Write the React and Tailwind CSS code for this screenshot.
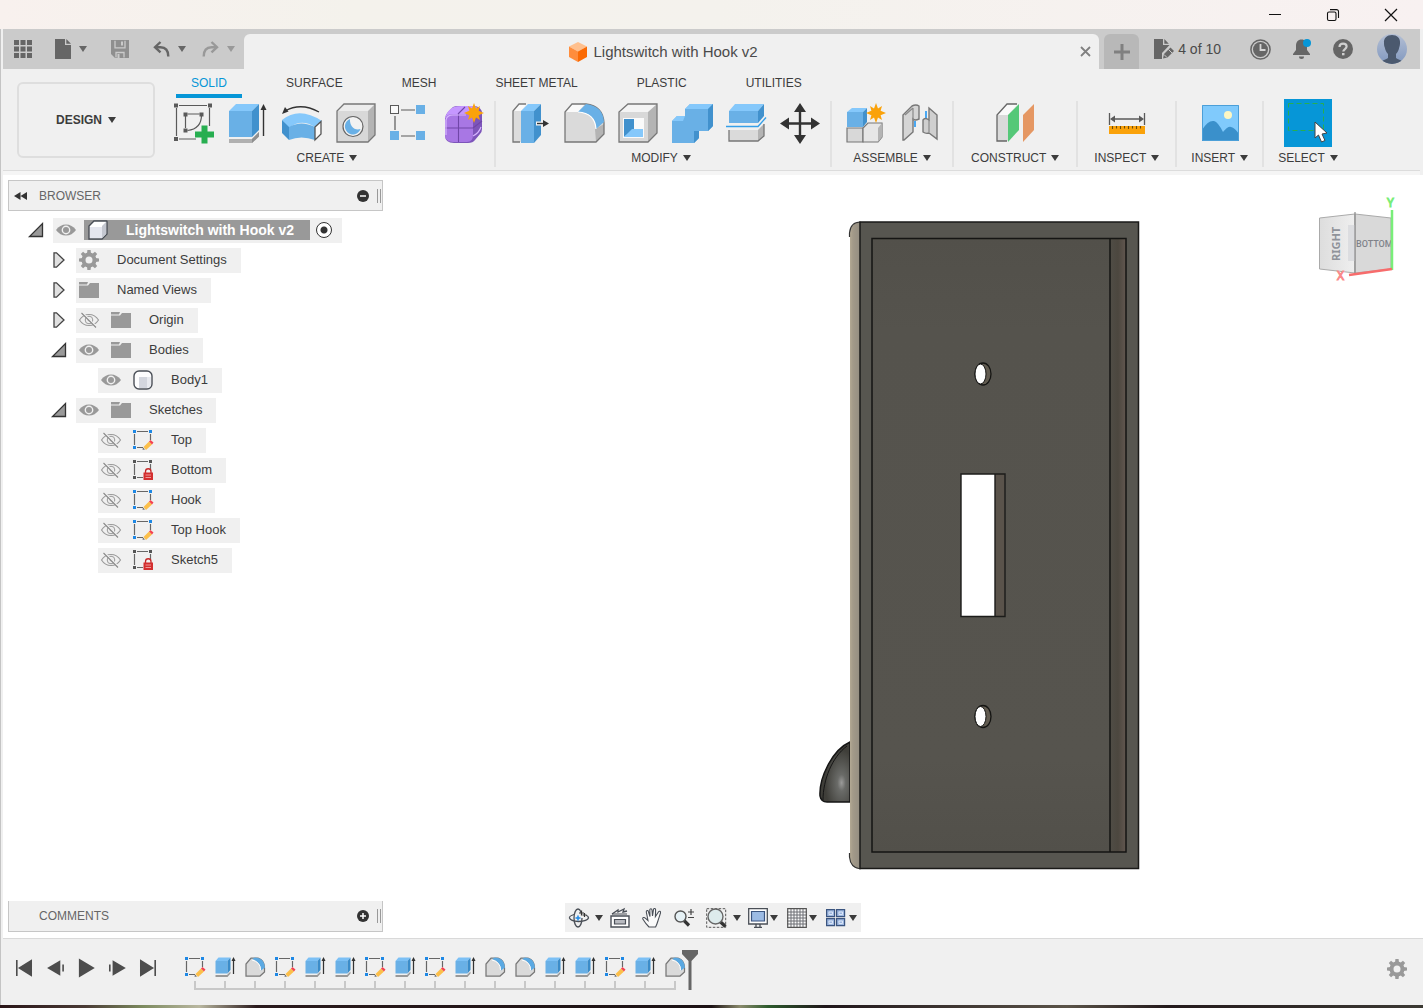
import React, { useState } from 'react';

const Caret = ({ className = 'text-[#3c3c3c]' }) => (
  <svg className={`w-2 h-1.5 shrink-0 ${className}`} viewBox="0 0 8 6" fill="currentColor">
    <path d="M0 0h8L4 6z" />
  </svg>
);

const Svg = ({ size = 'w-10 h-10', box = '0 0 40 40', children }) => (
  <svg className={`${size} shrink-0 block overflow-visible`} viewBox={box} fill="none">{children}</svg>
);

/* ---------- quick access bar icons ---------- */

const GridIcon = () => (
  <Svg size="w-[18px] h-[18px]" box="0 0 18 18">
    {[0, 6.5, 13].map(y => [0, 6.5, 13].map(x => <rect key={`${x}-${y}`} x={x} y={y} width="5" height="5" fill="#666" />))}
  </Svg>
);

const FileIcon = () => (
  <Svg size="w-[18px] h-5" box="0 0 18 20">
    <path d="M1 0h10v6h6v13.5a.5.5 0 0 1-.5.5h-15a.5.5 0 0 1-.5-.5z" fill="#666" />
    <path d="M12.300 0L17 4.800h-4.700z" fill="#666" />
  </Svg>
);

const SaveIcon = () => (
  <Svg size="w-[18px] h-[18px]" box="0 0 18 18">
    <path d="M0 0h18v18H4l-4-4z" fill="#8f8f8f" />
    <path d="M4 .800v7h10v-7M5 17.500v-5h8v5" stroke="#cbcbcb" strokeWidth="1.300" />
    <path d="M10 1.500h2v4h-2zM6.500 14h2v4h-2z" fill="#cbcbcb" />
  </Svg>
);

const UndoIcon = ({ flip, color }) => (
  <Svg size="w-[17px] h-4" box="0 0 17 16">
    <g transform={flip ? 'translate(17 0) scale(-1 1)' : undefined} stroke={color} strokeWidth="2.400">
      <path d="M7.500 1L2 6.200l5.500 5.200" />
      <path d="M2 6.200h5.500c5 0 7.800 3.300 7.800 9.300" />
    </g>
  </Svg>
);

const JobIcon = () => (
  <Svg size="w-5 h-5" box="0 0 20 20">
    <path d="M0 0h9v6h6.500L8 14v6H0z" fill="#666" />
    <path d="M10.300 0l4.500 4.800h-4.500z" fill="#666" />
    <path d="M9 19.500l1-4.500 6.500-6.500 3.500 3.500-6.500 6.500z" fill="#666" />
    <path d="M14.500 10.500l3.500 3.500M10 15.500l3 3" stroke="#cbcbcb" />
  </Svg>
);

const ClockIcon = () => (
  <Svg size="w-[21px] h-[21px]" box="0 0 21 21">
    <circle cx="10.500" cy="10.500" r="9.600" stroke="#666" strokeWidth="1.500" />
    <circle cx="10.500" cy="10.500" r="7.500" fill="#666" />
    <path d="M10.500 5v6h5" stroke="#d5d5d5" strokeWidth="1.800" />
  </Svg>
);

const BellIcon = () => (
  <Svg size="w-5 h-[22px]" box="0 0 20 22">
    <path d="M8.500 1.500c3.600 0 5.500 2.500 5.500 6.500v4l3 4v1H0v-1l3-4V8c0-4 2-6.500 5.500-6.500z" fill="#666" />
    <path d="M6 18.500h5a2.500 2.500 0 0 1-5 0z" fill="#666" />
    <circle cx="14" cy="5" r="4" fill="#0696d7" />
  </Svg>
);

const HelpIcon = () => (
  <Svg size="w-5 h-5" box="0 0 20 20">
    <circle cx="10" cy="10" r="10" fill="#666" />
    <path d="M6.500 8c0-2.200 1.500-3.400 3.600-3.400s3.500 1.200 3.500 3c0 2.400-3.300 2.600-3.300 5" stroke="#cfcfcf" strokeWidth="2.200" />
    <rect x="9" y="14" width="2.500" height="2.300" fill="#cfcfcf" />
  </Svg>
);

const Avatar = () => (
  <svg className="w-[30px] h-[30px] rounded-full" viewBox="0 0 30 30">
    <defs>
      <linearGradient id="avatar" x1="0" y1="0" x2="0" y2="1">
        <stop offset="0" stopColor="#b4bfd4" />
        <stop offset="1" stopColor="#8198bf" />
      </linearGradient>
    </defs>
    <rect width="30" height="30" fill="url(#avatar)" />
    <path d="M7 9c-.500-5 3-8 8-8s8.500 3 8 8c0 2-.300 3-.800 4.500-.500 3-1.700 5-3.200 6.500v4c2 1.500 4.500 2 7 3.500l-4 2.500H8l-4-2.500c2.500-1.500 5-2 7-3.500v-4c-1.500-1.500-2.700-3.500-3.200-6.500C7.200 12 7 11 7 9z" fill="#4b596e" />
  </svg>
);

const OrangeCube = () => (
  <Svg size="w-[18px] h-5" box="0 0 18 20">
    <path d="M9 0l9 4.500L9 9.500 0 4.500z" fill="#ffc08e" />
    <path d="M0 4.500l9 5V20l-9-5z" fill="#ff8d3c" />
    <path d="M18 4.500l-9 5V20l9-5z" fill="#fb6a04" />
  </Svg>
);

/* ---------- ribbon icons ---------- */

const Star = ({ x, y }) => (
  <path
    transform={`translate(${x} ${y})`}
    d="M0-10L2-4.600 6-7 4.600-2.200 10 0 4.600 2.200 6 7 2 4.600 0 10-2 4.600-6 7-4.600 2.200-10 0-4.600-2.200-6-7-2-4.600z"
    fill="#faa20a"
  />
);

const CreateSketch = () => (
  <Svg>
    <path d="M5 2.500h28M2.500 5v28M35.500 5v18M5 36h17M13.500 11h12M11.500 13v12M27.500 12c0 9-5 14.500-14 15.500" stroke="#5a5a5a" strokeWidth="1.200" />
    <path d="M0 .500h4v4H0zM34 .500h4v4h-4zM0 34h4v4H0zM9.500 9.500h4v4h-4zM25.500 9.500h4v4h-4zM9.500 25.500h4v4h-4z" fill="#5a5a5a" />
    <path d="M27.500 22.500h6v6H40v6h-6.500v6h-6v-6H21v-6h6.500z" fill="#27ae50" />
  </Svg>
);

const Extrude = () => (
  <Svg>
    <path d="M1 36h23l7-7v4.500L24 40H1z" fill="#b0b0b0" />
    <path d="M24 36l7-7v4.500L24 40z" fill="#8f8f8f" />
    <path d="M1 8l7-7h23l-7 7z" fill="#85c8fb" />
    <path d="M1 8h23v26H1z" fill="#69b0e6" />
    <path d="M24 8l7-7v26l-7 7z" fill="#4191cd" />
    <path d="M35.500 5v28" stroke="#333" strokeWidth="1.400" />
    <path d="M35.500 1l3 6h-6z" fill="#333" />
  </Svg>
);

const Revolve = () => (
  <Svg>
    <path d="M0 17Q17 3 40 18l-7 6Q19 15 7 25z" fill="#85c8fb" />
    <path d="M0 17l7 7v13l-7-7z" fill="#4191cd" />
    <path d="M7 24Q19 17 33 24v13Q19 32 7 37z" fill="#69b0e6" />
    <path d="M33 24l6-5.500V31l-6 6z" fill="#fafafa" stroke="#555" strokeWidth="1.300" />
    <path d="M3 8Q19-1 37 9" stroke="#333" strokeWidth="1.300" />
    <path d="M0 11l3-7 3.500 4.500z" fill="#333" />
  </Svg>
);

const Hole = () => (
  <Svg>
    <path d="M1 8l7-7h31l-7 7z" fill="#ececec" />
    <path d="M1 8h31v31H1z" fill="#d8d8d8" />
    <path d="M32 8l7-7v31l-7 7z" fill="#b4b4b4" />
    <path d="M1 39V8l7-7h31v31l-7 7z" stroke="#777" strokeWidth="1.300" />
    <circle cx="17" cy="23.500" r="10" fill="#f2f2f2" stroke="#666" strokeWidth="1.200" />
    <path d="M14 16a8 8 0 1 0 10.500 10c-6 2-11-3-10.500-10z" fill="#69b0e6" />
  </Svg>
);

const Pattern = () => (
  <Svg>
    <path d="M11 7h14M5 13v14M11 33h14" stroke="#5a5a5a" strokeWidth="1.200" />
    <rect x=".5" y="2.500" width="8" height="8" fill="#fafafa" stroke="#5a5a5a" />
    <path d="M26 2h9v9h-9zM0 28h9v9H0zM26 28h9v9h-9z" fill="#69b0e6" />
  </Svg>
);

const Form = () => (
  <Svg>
    <path d="M1 16Q1 12 4 9l5-5q2-1 5-1h15q9 0 9 8v15q0 3-2 5l-5 6q-2 3-7 3H10q-9 0-9-8z" fill="#7d55ba" />
    <path d="M1 15Q3 7 10 4q3-1 8-1h11q5 1 6 4L26 13H8z" fill="#c597ff" />
    <path d="M1 18q0-7 7-7h15q6 0 6 6v15q0 7-6 7H9q-8 0-8-7z" fill="#a877e4" />
    <path d="M14.500 11v28M1 25h28M14 11l7-7M29 25l9-7" stroke="#7046a8" strokeWidth="1.100" />
    <path d="M2 32q0-4 0-15 1-5 7-5h13M29 33q6-3 8-9" stroke="#d5b4ff" strokeWidth="1.200" />
    <Star x={30} y={10} />
  </Svg>
);

const PressPull = () => (
  <Svg>
    <path d="M3 8l6-7h8l-6 7v31H3z" fill="#dcdcdc" />
    <path d="M3 8l6-7h8l-6 7z" fill="#fafafa" />
    <path d="M10 39H3V8l6-7h7" stroke="#777" strokeWidth="1.300" />
    <path d="M11 8l7-7h13l-7 7z" fill="#85c8fb" />
    <path d="M11 8h13v32H11z" fill="#69b0e6" />
    <path d="M24 8l7-7v31l-7 8z" fill="#4191cd" />
    <path d="M26 20.500h8" stroke="#f5f5f5" strokeWidth="4" />
    <path d="M27 20.500h7" stroke="#333" strokeWidth="1.400" />
    <path d="M33 17l6 3.500-6 3.500z" fill="#333" />
  </Svg>
);

const Fillet = () => (
  <Svg>
    <path d="M1 39V9l7-8h14q17 2 18 19v11l-8 8z" fill="#dadada" />
    <path d="M1 9l7-8h13l-7 8z" fill="#fafafa" />
    <path d="M31 26l9-5v10l-8 8z" fill="#b4b4b4" />
    <path d="M1 39V9l7-8h14q17 2 18 19v11l-8 8z" stroke="#777" strokeWidth="1.300" />
    <path d="M14 9l8-8q17 2 18 18l-8 7q0-16-18-17z" fill="#69b0e6" />
    <path d="M14 9q17 1 18 17" stroke="#fff" strokeWidth="1.200" />
  </Svg>
);

const Shell = () => (
  <Svg>
    <path d="M1 9l9-8h29l-9 8z" fill="#f4f4f4" />
    <path d="M1 9h29v30H1z" fill="#d8d8d8" />
    <path d="M30 9l9-8v29l-9 9z" fill="#b4b4b4" />
    <path d="M1 39V9l9-8h29v29l-9 9z" stroke="#777" strokeWidth="1.300" />
    <path d="M5 15h21v20H5z" fill="#fafafa" />
    <path d="M6 16h10v10L6 34z" fill="#4191cd" />
    <path d="M6 34l8-8h11v8z" fill="#85c8fb" />
  </Svg>
);

const Combine = () => (
  <Svg>
    <path d="M0 18l5-5h8V6l5-5h23v22l-5 5h-9v7l-5 5H0z" fill="#69b0e6" />
    <path d="M13 6l5-5h23l-5 5zM0 18l5-5h8l-2 5z" fill="#85c8fb" />
    <path d="M36 6l5-5v22l-5 5zM22 28h5v7l-5 5z" fill="#4191cd" />
  </Svg>
);

const Split = () => (
  <Svg>
    <path d="M3 8l6-7h29l-6 7z" fill="#85c8fb" />
    <path d="M3 8h29v12H3z" fill="#69b0e6" />
    <path d="M32 8l6-7v12l-6 7z" fill="#4191cd" />
    <path d="M0 23.500h32l8-9" stroke="#359fe8" strokeWidth="1.400" />
    <path d="M3 27h29l6-6v12l-6 5H3z" fill="#dadada" />
    <path d="M32 27l6-6v12l-6 5z" fill="#b4b4b4" />
    <path d="M3 27v11h29l6-5V21" stroke="#777" strokeWidth="1.300" />
  </Svg>
);

const Move = () => (
  <Svg>
    <path d="M20 6v28M6 20.500h28" stroke="#333" strokeWidth="2.400" />
    <path d="M20 0l6 9H14zM20 41l6-9H14zM0 20.500l9-6v12zM40 20.500l-9-6v12z" fill="#333" />
  </Svg>
);

const NewComponent = () => (
  <Svg>
    <path d="M1 25h16v14H1z" fill="#d8d8d8" stroke="#777" strokeWidth="1.200" />
    <path d="M17 25l5-5h14v14l-4 5H17z" fill="#e6e6e6" stroke="#777" strokeWidth="1.200" />
    <path d="M32 25l4-5v14l-4 5z" fill="#b4b4b4" />
    <path d="M1 9l5-4h15l-4 4z" fill="#85c8fb" />
    <path d="M1 9h16v15H1z" fill="#69b0e6" />
    <path d="M17 9l4-4v14l-4 5z" fill="#4191cd" />
    <Star x={30} y={10} />
  </Svg>
);

const Joint = () => (
  <Svg>
    <path d="M3 12l9-9q4-2 7 0v13q-4 2-6 0v13L4 37H3z" fill="#d5d5d5" stroke="#777" strokeWidth="1.400" />
    <path d="M13 5v12M5 12l8-7" stroke="#8a8a8a" strokeWidth="1.200" />
    <path d="M15 18v6M26 8v8" stroke="#2196f3" strokeWidth="1.600" />
    <path d="M37 12l-8-7v12q-4-3-6 0v12q3 2 6 1l8 6z" fill="#cfcfcf" stroke="#777" strokeWidth="1.400" />
    <path d="M29 17v12" stroke="#8a8a8a" strokeWidth="1.200" />
  </Svg>
);

const Plane = () => (
  <Svg>
    <path d="M2 12L12 1h11L13 12v26H2z" fill="#dadada" />
    <path d="M2 12L12 1h11L13 12z" fill="#fafafa" />
    <path d="M12 38H2V12L12 1h10" stroke="#666" strokeWidth="1.300" />
    <path d="M13 12L24 1v26L13 39z" fill="#55c878" />
    <path d="M28 12L39 1v26L28 39z" fill="#e59763" />
  </Svg>
);

const Measure = () => (
  <Svg>
    <path d="M2.500 10v12M37.500 10v12M7 16h26" stroke="#5a5a5a" strokeWidth="1.300" />
    <path d="M3 16l5-3.500v7zM37 16l-5-3.500v7z" fill="#5a5a5a" />
    <path d="M2 23h36v8H2z" fill="#faa20a" />
    <path d="M5.500 23v3M9.500 23v2.500M13.500 23v3M17.500 23v2.500M21.500 23v3M25.500 23v2.500M29.500 23v3M33.500 23v2.500" stroke="#6d4c0a" strokeWidth="1.100" />
  </Svg>
);

const Picture = () => (
  <Svg>
    <path d="M2 2h37v36H2z" fill="#80cafc" />
    <path d="M2 27Q8 17 14 18q4 1 9 11 5-6 8-5 4 1 8 7v7H2z" fill="#3a90cb" />
    <circle cx="28" cy="12" r="4" fill="#fdf7c3" />
    <path d="M2.500 2.500h36v35h-36z" stroke="#4b9fd8" />
  </Svg>
);

const SelectIcon = () => (
  <Svg size="w-12 h-12 -my-1" box="0 0 48 48">
    <path d="M0 0h48v48H0z" fill="#0696d7" />
    <path d="M4.500 4.500h35v27h-35z" stroke="#27ae50" strokeDasharray="5 3" />
    <path d="M31 23v16l3.500-3 3 7 3.500-1.500-3-6.500 5-1z" fill="#fff" stroke="#444" />
  </Svg>
);

const groups = [
  { name: 'CREATE', pad: 'pl-3.5 pr-2.5', labelPad: 'px-4', icons: [CreateSketch, Extrude, Revolve, Hole, Pattern, Form] },
  { name: 'MODIFY', pad: 'pl-3.5 pr-2.5', labelPad: 'pl-3 pr-4', icons: [PressPull, Fillet, Shell, Combine, Split, Move] },
  { name: 'ASSEMBLE', pad: 'pl-3.5 pr-3', labelPad: 'px-4', icons: [NewComponent, Joint] },
  { name: 'CONSTRUCT', pad: 'px-3', labelPad: 'px-[17px]', icons: [Plane] },
  { name: 'INSPECT', pad: 'px-3', labelPad: 'px-4', icons: [Measure] },
  { name: 'INSERT', pad: 'px-3', labelPad: 'px-3.5', icons: [Picture] },
  { name: 'SELECT', pad: 'px-3', labelPad: 'px-3.5', icons: [SelectIcon] }
];

const tabs = ['SOLID', 'SURFACE', 'MESH', 'SHEET METAL', 'PLASTIC', 'UTILITIES'];

/* ---------- browser tree icons ---------- */

const Eye = () => (
  <Svg size="w-5 h-5" box="0 0 20 20">
    <path d="M0 10Q4 4.500 10 4.500T20 10q-4 5.500-10 5.500T0 10z" fill="#999" />
    <circle cx="10" cy="10" r="3.700" stroke="#f0f0f0" strokeWidth="1.400" />
  </Svg>
);

const EyeOff = () => (
  <Svg size="w-5 h-5" box="0 0 20 20">
    <path d="M.500 10Q4 4.500 10 4.500T19.500 10Q16 15.500 10 15.500T.500 10z" stroke="#999" strokeWidth="1.100" />
    <circle cx="10" cy="10" r="3.800" stroke="#999" />
    <circle cx="10" cy="10" r="1.300" fill="#999" />
    <path d="M3.500 3L18 17.500" stroke="#f0f0f0" strokeWidth="2" />
    <path d="M2.500 3L17 17.500" stroke="#888" strokeWidth="1.100" />
  </Svg>
);

const Folder = () => (
  <Svg size="w-5 h-5" box="0 0 20 20">
    <path d="M0 2h9l-1 2.500H0zM0 5.500h9L11 3h9v15H0z" fill="#999" />
  </Svg>
);

const Gear = () => (
  <Svg size="w-5 h-5" box="0 0 20 20">
    <circle cx="10" cy="10" r="5.500" stroke="#999" strokeWidth="4" />
    {[0, 45, 90, 135, 180, 225, 270, 315].map(a => (
      <path key={a} d="M8 3.500L8.400 0h3.200l.400 3.500z" fill="#999" transform={`rotate(${a} 10 10)`} />
    ))}
  </Svg>
);

const BoxIcon = () => (
  <Svg size="w-5 h-5" box="0 0 20 20">
    <path d="M1 19V6l5-5h12.500q.500 0 .500.500V14l-5 5z" fill="#fff" stroke="#4a4f57" strokeWidth="1.400" />
    <path d="M2 7h12v11H2z" fill="#e4e6ee" />
    <path d="M14 6l4-4v12l-4 4z" fill="#c4c7d0" />
  </Svg>
);

const BodyIcon = () => (
  <Svg size="w-5 h-5" box="0 0 20 20">
    <rect x="1" y="1" width="18" height="18" rx="5" fill="#fdfdfe" stroke="#4a4f57" strokeWidth="1.400" />
    <path d="M6 7h8v11H6z" fill="#d3d6de" />
    <path d="M14 7h4v8q-1 3-4 3z" fill="#e8eaef" />
  </Svg>
);

const Sketch = ({ locked }) => {
  const dot = locked ? '#555' : '#1e88e5';
  return (
    <Svg size="w-5 h-5" box="0 0 20 20">
      <path d="M4 1.500h11M1.500 4v11M17.500 4v6M4 17.500h6" stroke="#666" strokeWidth="1.200" />
      <path d="M0 0h3v3H0zM16 0h3v3h-3zM0 16h3v3H0z" fill={dot} />
      {locked ? (
        <>
          <path d="M12.500 13v-1.500a2.700 2.700 0 0 1 5.500 0V13" stroke="#c62828" strokeWidth="1.300" />
          <rect x="10.500" y="12.500" width="9.500" height="7.500" fill="#d32f2f" />
          <path d="M12.500 15h5.500M12.500 17.500h5.500" stroke="#ee9a9a" />
        </>
      ) : (
        <>
          <path d="M12 19.500l-2.500.300.500-2.300z" fill="#666" />
          <path d="M10.500 17l5.500-5.500 3 3-6 5.500z" fill="#fbbf4b" />
          <path d="M16 11.500l1.500-1.500 3 2.500-1.500 2z" fill="#f4414f" />
        </>
      )}
    </Svg>
  );
};

const SketchLocked = () => <Sketch locked />;

const Expander = ({ open }) => (
  <Svg size="w-4 h-4" box="0 0 16 16">
    {open ? (
      <path d="M14.500 1.500v13h-13z" fill="#999" stroke="#333" strokeWidth="1.300" />
    ) : (
      <path d="M3 .800h2.500L13 8l-7.500 7.200H3z" fill="#e0e0e0" stroke="#444" strokeWidth="1.300" />
    )}
  </Svg>
);

const tree = [
  { name: 'Document Settings', depth: 1, open: false, icon: Gear },
  { name: 'Named Views', depth: 1, open: false, icon: Folder },
  { name: 'Origin', depth: 1, open: false, eye: 'off', icon: Folder },
  { name: 'Bodies', depth: 1, open: true, eye: 'on', icon: Folder },
  { name: 'Body1', depth: 2, eye: 'on', icon: BodyIcon },
  { name: 'Sketches', depth: 1, open: true, eye: 'on', icon: Folder },
  { name: 'Top', depth: 2, eye: 'off', icon: Sketch },
  { name: 'Bottom', depth: 2, eye: 'off', icon: SketchLocked },
  { name: 'Hook', depth: 2, eye: 'off', icon: Sketch },
  { name: 'Top Hook', depth: 2, eye: 'off', icon: Sketch },
  { name: 'Sketch5', depth: 2, eye: 'off', icon: SketchLocked }
];

const TreeRow = ({ item }) => {
  const [visible, setVisible] = useState(item.eye === 'on');
  const Icon = item.icon;
  return (
    <li className={`flex items-center h-[30px] ${item.depth === 2 ? 'pl-[90px]' : 'pl-[43px]'}`}>
      {item.open !== undefined && (
        <button aria-label={`Toggle ${item.name}`} className="mr-[9px]"><Expander open={item.open} /></button>
      )}
      <div className="flex items-center h-[25px] bg-[#f0f0f0] pl-[3px] pr-3.5">
        {item.eye && (
          <button aria-label={`Visibility of ${item.name}`} className="mr-3" onClick={() => setVisible(!visible)}>
            {visible ? <Eye /> : <EyeOff />}
          </button>
        )}
        <Icon />
        <span className="ml-[18px] text-[13px] text-[#3c3c3c] whitespace-nowrap">{item.name}</span>
      </div>
    </li>
  );
};

const PanelHeader = ({ title, collapsed }) => (
  <div className={`flex items-center h-[31px] bg-[#f0f0f0] border-[#c6c6c6] ${collapsed ? 'border-x border-b' : 'border'}`}>
    <span className="w-[30px] pl-[5px]">
      {!collapsed && (
        <Svg size="w-[13px] h-2" box="0 0 13 8"><path d="M6.500 0v8L0 4zM13 0v8L6.500 4z" fill="#333" /></Svg>
      )}
    </span>
    <span className="flex-1 text-xs text-[#666]">{title}</span>
    <button aria-label={collapsed ? `Expand ${title}` : `Collapse ${title}`}>
      <Svg size="w-3 h-3" box="0 0 12 12">
        <circle cx="6" cy="6" r="6" fill="#333" />
        <path d={collapsed ? 'M3 6h6M6 3v6' : 'M3 6h6'} stroke="#fff" strokeWidth="1.500" />
      </Svg>
    </button>
    <span className="ml-2 mr-px h-3.5 w-1 border-x border-[#999]" />
  </div>
);

/* ---------- viewport ---------- */

const Model = () => (
  <svg className="absolute inset-0 w-full h-full" viewBox="3 175 1420 763" fill="none">
    <defs>
      <linearGradient id="side" x1="0" x2="1" y1="0" y2="0">
        <stop offset="0" stopColor="#b3a994" />
        <stop offset=".25" stopColor="#a39a89" />
        <stop offset="1" stopColor="#918b80" />
      </linearGradient>
      <linearGradient id="lip" x1="0" x2="1" y1="0" y2="0">
        <stop offset="0" stopColor="#504d46" />
        <stop offset=".5" stopColor="#4c473f" />
        <stop offset="1" stopColor="#625750" />
      </linearGradient>
      <linearGradient id="face" x1="0" x2="0" y1="0" y2="1">
        <stop offset="0" stopColor="#52504a" />
        <stop offset=".15" stopColor="#55534d" />
        <stop offset=".85" stopColor="#56544e" />
        <stop offset="1" stopColor="#52504a" />
      </linearGradient>
      <radialGradient id="hook" cx=".72" cy=".68" r=".55">
        <stop offset="0" stopColor="#9b9b9a" />
        <stop offset=".25" stopColor="#6a6b68" />
        <stop offset="1" stopColor="#3f3e39" />
      </radialGradient>
    </defs>
    <path d="M850 742C832 750 819 778 820 796q1 6 7 6h23z" fill="url(#hook)" stroke="#151515" strokeWidth="1.500" />
    <path d="M847 746C832 757 823 780 823 800" stroke="#151515" />
    <path d="M861 222q-11 0-11 12v623q0 12 11 12z" fill="url(#side)" />
    <path d="M849.500 237v-4q1-11 11-11M849.500 853v4q1 11 11 12" stroke="#333" strokeWidth="1.200" />
    <path d="M860 222h278.500v646.500H860z" fill="#575650" stroke="#1a1a18" strokeWidth="1.500" />
    <path d="M872 238.500h254V852H872z" fill="url(#face)" />
    <path d="M1110 238.500h16V852h-16z" fill="url(#lip)" />
    <path d="M872 238.500h254V852H872zM1110 238.500V852" stroke="#151513" strokeWidth="1.500" />
    <path d="M961 474h34v142.500h-34z" fill="#fff" />
    <path d="M995 474h10v142.500h-10z" fill="#5a534b" />
    <path d="M961 474h44v142.500h-44zM995 474v142.500" stroke="#1c1c1a" strokeWidth="1.400" />
    {[374, 716.5].map(cy => (
      <g key={cy}>
        <ellipse cx="983" cy={cy} rx="8" ry="11" fill="#625c51" stroke="#151513" strokeWidth="1.300" />
        <ellipse cx="980.500" cy={cy} rx="5.500" ry="10" fill="#fff" stroke="#151513" />
      </g>
    ))}
  </svg>
);

const ViewCube = () => (
  <svg className="absolute top-5 right-6 w-20 h-[90px]" viewBox="1319 195 80 90" fill="none">
    <defs>
      <linearGradient id="cubeLeft" x1="0" x2="1" y1="0" y2="0">
        <stop offset="0" stopColor="#ddd" />
        <stop offset="1" stopColor="#efefef" />
      </linearGradient>
    </defs>
    <path d="M1319.500 218l35.500-4v59l-35.500-4z" fill="url(#cubeLeft)" stroke="#aaa" />
    <path d="M1355 214l36 4v51l-36 4z" fill="#d9d9d9" stroke="#aaa" />
    <path d="M1348 225h7v36h-7z" fill="#dcdde0" />
    <path d="M1355 212v61" stroke="#8c8c8c" strokeWidth="1.200" />
    <text transform="translate(1340 261) rotate(-90)" className="text-[11px] font-bold font-['Noto_Sans']" fill="#8f9299">RIGHT</text>
    <text x="1356" y="247" className="text-[9px] font-medium font-['Roboto']" fill="#80838a">BOTTOM</text>
    <path d="M1392 210v60" stroke="#79ee79" strokeWidth="2.500" />
    <path d="M1392 269l-43 6" stroke="#f76c6c" strokeWidth="2.500" />
    <text x="1387" y="207" className="text-xs font-['Noto_Sans']" fill="#79ee79" stroke="#79ee79">Y</text>
    <text x="1337" y="280" className="text-xs font-['Noto_Sans']" fill="#fa8b8b" stroke="#fa8b8b">X</text>
  </svg>
);

/* ---------- navigation bar ---------- */

const Orbit = () => (
  <Svg size="w-5 h-5" box="0 0 20 20">
    <ellipse cx="9" cy="10" rx="4" ry="9" stroke="#4a4f57" strokeWidth="1.300" />
    <path d="M5 6.500Q0 8 .500 10q1 3 9 3.500 9-.500 10-3.500 0-2-3-3" stroke="#4a4f57" strokeWidth="1.300" />
    <path d="M10 5h7v5h-7z" fill="#f0f0f0" />
    <path d="M9 7.500v5M6.500 10h5" stroke="#1e88e5" strokeWidth="1.500" />
    <path d="M10 5h5M12.500 2.500v5M13.500 7h4M15.500 5v4" stroke="#333" strokeWidth="1.200" />
  </Svg>
);

const LookAt = () => (
  <Svg size="w-5 h-5" box="0 0 20 20">
    <path d="M1 8h18v11H1z" fill="#fff" stroke="#4a4f57" strokeWidth="1.400" />
    <path d="M4.500 11.500h11v4.500h-11z" fill="#b8bac0" stroke="#4a4f57" strokeWidth="1.200" />
    <path d="M2 6l6-4v2l6-3-1 3 4-1" stroke="#4a4f57" strokeWidth="1.300" />
    <path d="M2 6h15" stroke="#4a4f57" />
  </Svg>
);

const Hand = () => (
  <Svg size="w-5 h-5" box="0 0 20 20">
    <path d="M7 19C4 16 2 13 .800 11c-.500-1.500 1.500-2 2.500-.800L6 12.500 4.300 4c-.200-1.700 1.700-2 2.100-.500L8 8.500 7.800 2c0-1.600 2.100-1.600 2.200 0l.500 6 1-6.500c.300-1.500 2.200-1.200 2.100.300L13.400 8.500l3-4.500c.900-1.300 2.500-.700 2.100.800-1 3.500-1.900 6-2.600 8.200-.700 2.500-1.300 4-2.300 6z" fill="#fafafa" stroke="#4a4f57" strokeWidth="1.100" />
  </Svg>
);

const Zoom = () => (
  <Svg size="w-5 h-5" box="0 0 20 20">
    <path d="M10 12.500l5 5" stroke="#333" strokeWidth="3.200" />
    <circle cx="6.500" cy="8.500" r="5.500" fill="#e6f1f5" stroke="#555" strokeWidth="1.400" />
    <path d="M14 4h6M17 1v6M14 9.500h6" stroke="#444" strokeWidth="1.200" />
  </Svg>
);

const ZoomWindow = () => (
  <Svg size="w-[21px] h-5" box="0 0 21 20">
    <path d="M.700.700h19v18.600h-19z" stroke="#555" strokeDasharray="2.500 1.500" />
    <path d="M14 13.500l5.500 5" stroke="#333" strokeWidth="3.400" />
    <circle cx="9.500" cy="8.500" r="7.500" fill="#ddebec" stroke="#666" strokeWidth="1.400" />
  </Svg>
);

const Display = () => (
  <Svg size="w-5 h-5" box="0 0 20 20">
    <path d="M.700.700h18.600V16H.700z" fill="#fff" stroke="#4a4f57" strokeWidth="1.300" />
    <path d="M3.500 3.500h13V13h-13z" fill="#9cbbe4" stroke="#3b5580" strokeWidth="1.200" />
    <path d="M6 19.300h8M8 16v3M12 16v3" stroke="#4a4f57" strokeWidth="1.300" />
  </Svg>
);

const GridSnap = () => (
  <Svg size="w-5 h-5" box="0 0 20 20">
    <path d="M.700.700h18.600v18.600H.700z" fill="#fafafa" />
    <path d="M4 0v20M7 0v20M10 0v20M13 0v20M16 0v20M0 4h20M0 7h20M0 10h20M0 13h20M0 16h20" stroke="#6c6f75" />
    <path d="M.700.700h18.600v18.600H.700z" stroke="#555" strokeWidth="1.200" />
  </Svg>
);

const Viewports = () => (
  <Svg size="w-[19px] h-[17px]" box="0 0 19 17">
    {[[0, 0], [10, 0], [0, 9], [10, 9]].map(([x, y]) => (
      <g key={`${x}-${y}`} transform={`translate(${x} ${y})`}>
        <path d="M.600.600h8v7h-8z" fill="#9cb6df" stroke="#3b5580" strokeWidth="1.200" />
        <path d="M3 3h3.500v2.500H3z" stroke="#dbe6f7" />
      </g>
    ))}
  </Svg>
);

const navItems = [
  { name: 'Orbit', icon: Orbit, caret: true, space: 'gap-1.5 mr-[7px]' },
  { name: 'Look At', icon: LookAt, space: 'mr-3' },
  { name: 'Pan', icon: Hand, space: 'mr-3' },
  { name: 'Zoom', icon: Zoom, space: 'mr-3' },
  { name: 'Zoom Window', icon: ZoomWindow, caret: true, space: 'gap-1.5 mr-[7px]' },
  { name: 'Display Settings', icon: Display, caret: true, space: 'gap-0.5 mr-[9px]' },
  { name: 'Grid and Snaps', icon: GridSnap, caret: true, space: 'gap-0.5 mr-[9px]' },
  { name: 'Viewports', icon: Viewports, caret: true, space: 'gap-1' }
];

/* ---------- timeline ---------- */

const SmallExtrude = () => (
  <Svg size="w-5 h-5">
    <path d="M1 36h23l7-7v4L25 40H1z" fill="#999" />
    <path d="M1 8l6-7h24l-6 7z" fill="#7cc0f5" />
    <path d="M1 8h24v25H1z" fill="#69b0e6" />
    <path d="M25 8l6-7v25l-6 7z" fill="#3b8cc9" />
    <path d="M37 4v30" stroke="#333" strokeWidth="2.500" />
    <path d="M37 0l4 8h-8z" fill="#333" />
  </Svg>
);

const SmallFillet = () => (
  <Svg size="w-5 h-5">
    <path d="M2 38V14L12 2h14q13 4 13 20v8l-9 8z" fill="#dadada" stroke="#777" strokeWidth="2.500" />
    <path d="M14 4l6-3q18 0 20 20l-8 6Q32 10 14 4z" fill="#5ba9e2" />
    <path d="M14 6q17 4 17 20" stroke="#fff" strokeWidth="2" />
  </Svg>
);

const features = 'SEFSEESESEFFEESEF'.split('');
const featureIcons = { S: Sketch, E: SmallExtrude, F: SmallFillet };
const featureNames = { S: 'Sketch', E: 'Extrude', F: 'Fillet' };

const playback = [
  { name: 'Go to start', d: 'M2 1v18M18 2v16L5 10z' },
  { name: 'Step back', d: 'M15 3v14L3 10zM19 6v8' },
  { name: 'Play', d: 'M3 1v18l15-9z' },
  { name: 'Step forward', d: 'M6 3v14l12-7zM2 6v8' },
  { name: 'Go to end', d: 'M18 1v18M2 2v16l13-8z' }
];

const Timeline = () => (
  <footer className="flex items-start h-[67px] bg-[#f0f0f0] border-t border-[#d9d9d9] pl-3 pr-[13px]">
    <div className="flex gap-[13px] mt-[19px] w-[165px] shrink-0">
      {playback.map(p => (
        <button key={p.name} aria-label={p.name}>
          <Svg size="w-[18px] h-5" box="0 0 20 20"><path d={p.d} fill="#4d4d4d" stroke="#4d4d4d" strokeWidth="1.800" /></Svg>
        </button>
      ))}
    </div>
    <div className="mt-[18px]">
      <div className="flex">
        {features.map((f, i) => {
          const Icon = featureIcons[f];
          return (
            <button key={i} aria-label={`${featureNames[f]} ${i + 1}`} className="w-[30px] flex flex-col items-center">
              <Icon />
              <span className="mt-1 w-0.5 h-[7px] bg-[#c8c8c8]" />
            </button>
          );
        })}
      </div>
      <div className="mx-3.5 h-0.5 bg-[#c8c8c8]" />
    </div>
    <button aria-label="History marker" className="relative -ml-2 mt-[11px]">
      <Svg size="w-4 h-10" box="0 0 16 40"><path d="M0 0h16v4L9.500 11v29h-3V11L0 4z" fill="#666" /></Svg>
    </button>
    <button aria-label="Timeline settings" className="ml-auto mr-[3px] mt-5"><Gear /></button>
  </footer>
);

const TitleBar = () => (
  <div className="flex justify-end h-[29px] pr-[3px] bg-[linear-gradient(90deg,#f8f1ee,#f4f2ec_25%,#f4f2ed_50%,#f8f1f1)]">
    <button aria-label="Minimize" className="w-[58px] flex items-center justify-center">
      <Svg size="w-3 h-3" box="0 0 12 12"><path d="M0 5.500h12" stroke="#111" /></Svg>
    </button>
    <button aria-label="Restore" className="w-[58px] flex items-center justify-center">
      <Svg size="w-3 h-3" box="0 0 12 12">
        <rect x=".5" y="3" width="8.500" height="8.500" rx="1.500" stroke="#111" strokeWidth="1.100" />
        <path d="M3 .600h6.500a2 2 0 0 1 2 2V9" stroke="#111" strokeWidth="1.100" />
      </Svg>
    </button>
    <button aria-label="Close" className="w-[58px] flex items-center justify-center">
      <Svg size="w-3 h-3" box="0 0 12 12"><path d="M0 0l12 12M12 0L0 12" stroke="#111" strokeWidth="1.200" /></Svg>
    </button>
  </div>
);

const DocumentBar = () => (
  <div className="flex h-10 mr-[3px] bg-[#cbcbcb]">
    <div className="flex items-center w-[241px] shrink-0 pl-[11px]">
      <button aria-label="Data panel" className="mr-[22px]"><GridIcon /></button>
      <button aria-label="File" className="flex items-center gap-[7px] mr-6"><FileIcon /><Caret className="text-[#666]" /></button>
      <button aria-label="Save" className="mr-6"><SaveIcon /></button>
      <button aria-label="Undo" className="flex items-center gap-2 mr-4"><UndoIcon color="#666" /><Caret className="text-[#666]" /></button>
      <button aria-label="Redo" className="flex items-center gap-2"><UndoIcon flip color="#999" /><Caret className="text-[#999]" /></button>
    </div>
    <div className="flex flex-1 mt-[5px] pl-3 rounded-t-md bg-[#f0f0f0]">
      <div className="flex flex-1 items-center justify-center gap-1.5 pt-px">
        <OrangeCube />
        <span className="text-[15px] text-[#4a4a4a] whitespace-nowrap">Lightswitch with Hook v2</span>
      </div>
      <button aria-label="Close document" className="w-7 flex items-center justify-center">
        <Svg size="w-[11px] h-[11px]" box="0 0 11 11"><path d="M1 1l9 9M10 1l-9 9" stroke="#808080" strokeWidth="1.800" /></Svg>
      </button>
    </div>
    <button aria-label="New design" className="w-[35px] ml-[5px] mt-[5px] rounded-t-md bg-[#b8b8b8] flex items-center justify-center">
      <Svg size="w-4 h-4" box="0 0 16 16"><path d="M8 0v16M0 8h16" stroke="#808080" strokeWidth="3" /></Svg>
    </button>
    <div className="flex items-center pr-[13px]">
      <button className="flex items-center gap-1 ml-[15px] text-sm text-[#4a4a4a] whitespace-nowrap"><JobIcon />4 of 10</button>
      <button aria-label="Job status" className="ml-[29px]"><ClockIcon /></button>
      <button aria-label="Notifications" className="ml-[22px]"><BellIcon /></button>
      <button aria-label="Help" className="ml-5"><HelpIcon /></button>
      <button aria-label="Account" className="ml-6"><Avatar /></button>
    </div>
  </div>
);

const Ribbon = () => {
  const [active, setActive] = useState('SOLID');
  return (
    <div className="flex h-[106px] mr-[3px] bg-[#f0f0f0] border-b-4 border-[#f5f5f5]">
      <div className="flex flex-1 border-b border-[#dcdcdc]">
        <button className="flex items-center justify-center gap-1.5 w-[138px] h-[76px] mt-[13px] ml-3.5 shrink-0 rounded-md border-2 border-[#dedede] text-xs font-bold text-[#3c3c3c]">
          DESIGN <Caret />
        </button>
        <div className="ml-[5px]">
          <nav className="flex gap-[29px] h-[29px] pl-4">
            {tabs.map(t => (
              <button
                key={t}
                onClick={() => setActive(t)}
                className={`px-[15px] pt-[3px] text-xs whitespace-nowrap border-b-4 ${active === t ? 'text-[#0696d7] border-[#0696d7]' : 'text-[#3c3c3c] border-transparent'}`}
              >
                {t}
              </button>
            ))}
          </nav>
          <div className="flex pt-[3px]">
            {groups.map(g => (
              <div key={g.name} className="flex flex-col items-center h-[66px] pt-0.5 border-r-2 border-[#e2e2e2] last:border-r-0">
                <div className={`flex h-10 gap-3.5 ${g.pad}`}>
                  {g.icons.map((Icon, i) => (
                    <button key={i} aria-label={`${g.name} ${i + 1}`}><Icon /></button>
                  ))}
                </div>
                <button className={`flex items-center gap-[5px] h-4 mt-[7px] text-xs text-[#3c3c3c] whitespace-nowrap ${g.labelPad}`}>{g.name} <Caret /></button>
              </div>
            ))}
          </div>
        </div>
      </div>
    </div>
  );
};

const Browser = () => (
  <section>
    <PanelHeader title="BROWSER" />
    <ul className="pt-1">
      <li className="flex items-center h-[30px] pl-5">
        <button aria-label="Toggle root component" className="mr-[9px]"><Expander open /></button>
        <div className="flex items-center h-[25px] bg-[#f0f0f0] pl-[3px] pr-2.5">
          <button aria-label="Visibility of root component" className="mr-2"><Eye /></button>
          <div className="flex items-center h-5 bg-[#999] pl-1 pr-4">
            <BoxIcon />
            <span className="ml-[18px] text-sm font-bold text-white whitespace-nowrap">Lightswitch with Hook v2</span>
          </div>
          <label className="flex items-center ml-1.5">
            <input type="radio" defaultChecked aria-label="Activate component" className="appearance-none w-4 h-4 rounded-full border border-[#333] bg-[radial-gradient(circle,#333_3px,#fff_4px)]" />
          </label>
        </div>
      </li>
      {tree.map(item => <TreeRow key={item.name} item={item} />)}
    </ul>
  </section>
);

const App = () => (
  <div className="flex flex-col min-h-screen bg-[#f0f0f0] font-['Liberation_Sans',Arial,sans-serif]">
    <TitleBar />
    <div className="flex flex-col flex-1 border-l border-[#c4c4c4] pl-0.5">
      <DocumentBar />
      <Ribbon />
      <main className="relative flex flex-1 bg-white pl-[5px] pt-[5px] pb-1.5">
        <Model />
        <div className="relative flex flex-col justify-between gap-6 w-[375px]">
          <Browser />
          <PanelHeader title="COMMENTS" collapsed />
        </div>
        <ViewCube />
        <div className="absolute bottom-1.5 left-1/2 -translate-x-1/2 flex items-center h-[29px] px-1 bg-[#f0f0f0]">
          {navItems.map(({ name, icon: Icon, caret, space }) => (
            <button key={name} aria-label={name} className={`flex items-center ${space}`}>
              <Icon />
              {caret && <Caret />}
            </button>
          ))}
        </div>
      </main>
      <Timeline />
    </div>
    <div className="h-[3px] bg-[linear-gradient(90deg,#2a1518,#4a3b35_6%,#7c8a5e_10%,#b9b7a0_14%,#2a1a1c_18%,#1c1214_50%,#8a8a6c_52%,#2c5a2c_54%,#20161a_58%,#5a5348_75%,#241a1c_82%,#3c3a34)]" />
  </div>
);

export default App;
